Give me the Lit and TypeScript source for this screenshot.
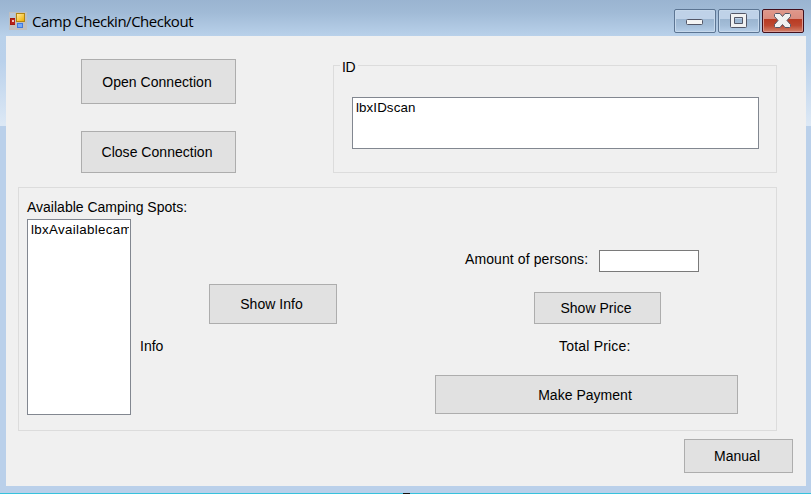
import { LitElement, html, svg, css } from "lit";
import { customElement, property } from "lit/decorators.js";

@customElement("form-button")
class FormButton extends LitElement {
  @property() label = "";
  static styles = css`
    :host { display: block; }
    button {
      box-sizing: border-box; width: 100%; height: 100%; display: block;
      margin: 0; padding: 0 3px 0 0; border: 1px solid #adadad; border-radius: 0;
      background: #e1e1e1; color: #000; font: inherit; letter-spacing: 0.03px;
    }
  `;
  render() {
    return html`<button>${this.label}</button>`;
  }
}

@customElement("list-box")
class ListBox extends LitElement {
  @property() item = "";
  static styles = css`
    :host {
      display: block; box-sizing: border-box; border: 1px solid #828790;
      background: #fff; padding: 2px 1px 0 3px;
      font-size: 13.33px; line-height: 16px; white-space: nowrap;
    }
    div { overflow: hidden; }
  `;
  render() {
    return html`<div>${this.item}</div>`;
  }
}

@customElement("caption-button")
class CaptionButton extends LitElement {
  @property({ reflect: true }) kind = "min";
  static styles = css`
    :host {
      display: block; box-sizing: border-box; width: 42px; height: 24px;
      border: 1px solid #5c7593; border-radius: 2px;
      box-shadow: inset 0 0 0 1px #c6d8eb;
      background: linear-gradient(#bfd2e8 0 40%, #9bb5d0 41%, #a3bdd8 70%, #b6cee8);
    }
    :host([kind="close"]) {
      border-color: #430f1b;
      box-shadow: inset 0 0 0 1px #dc9b91;
      background: linear-gradient(#e0988b 0, #d98c7f 40%, #b83a22 41%, #bd4730 70%, #d3836c);
    }
    svg { display: block; }
  `;
  render() {
    const glyph =
      this.kind === "min"
        ? svg`<rect x="11.5" y="9.5" width="16" height="5" rx="1" fill="#f4f4f4" stroke="#535666"/>`
        : this.kind === "max"
        ? svg`<path fill-rule="evenodd" d="M12.5 3.5h14a1 1 0 0 1 1 1v12a1 1 0 0 1-1 1h-14a1 1 0 0 1-1-1v-12a1 1 0 0 1 1-1zM15.5 7.5v6h8v-6z" fill="#f1f1f1" stroke="#535666"/>`
        : svg`<path d="M12.500 3.500h4.500l2.500 3 2.500-3h4.500l1 1v2l-3.500 4 3.500 4v2l-1 1h-4.500l-2.500-3-2.500 3h-4.500l-1-1v-2l3.500-4-3.500-4v-2z" fill="#f1f1f1" stroke="#535666" stroke-linejoin="round"/>`;
    return html`<svg width="40" height="22" viewBox="0 0 40 22">${glyph}</svg>`;
  }
}

@customElement("app-root")
class AppRoot extends LitElement {
  static styles = css`
    :host {
      display: flex; flex-direction: column; box-sizing: border-box;
      width: 811px; height: 494px; overflow: hidden; position: relative;
      background:
        linear-gradient(#9ab4d1, #a0bad6 12px, #b9d1ea 36px) 0 0 / 100% 36px no-repeat,
        linear-gradient(#b9d1ea, #bad1eb 25px, #dce8f5 88px, #dce8f5) 0 36px / 100% 90px no-repeat,
        #bad0ea;
      color: #000; font: 14px/18px "Liberation Sans", Arial, sans-serif;
    }
    .edge { height: 1px; margin-top: auto; background: #37c2dd; }
    .tick { width: 7px; height: 1px; margin-left: 403px; background: #111; }
    .title { height: 36px; flex: none; display: flex; box-sizing: border-box; padding: 9px 7px 0 9px; }
    .title .icon { display: block; margin-top: 3px; flex: none; }
    .title .text {
      flex: 1; margin: 2px 0 0 5px; white-space: nowrap;
      font: 15px/20px "Open Sans", "Noto Sans", sans-serif; letter-spacing: -0.48px;
    }
    .title .controls { display: flex; gap: 2px; }
    .client { box-sizing: border-box; width: 800px; height: 450px; margin-left: 6px; background: #f0f0f0; padding: 23px 13px 0 12px; flex: none; }
    .top { display: flex; justify-content: space-between; padding: 0 16px 0 63px; }
    .connection { width: 155px; display: flex; flex-direction: column; gap: 27px; }
    .open { height: 45px; }
    .close { height: 42px; }
    .id { box-sizing: border-box; width: 444px; height: 108px; margin-top: 6px; border: 1px solid #dcdcdc; padding: 0 17px 0 5px; }
    .legend { display: block; width: fit-content; margin: -8px 0 0 1px; padding: 0 3px 0 2px; background: #f0f0f0; height: 18px; letter-spacing: -0.3px; }
    .id list-box { height: 52px; margin: 21px 0 0 13px; letter-spacing: 0.1px; }
    .spots { box-sizing: border-box; width: 759px; height: 244px; margin-top: 14px; border: 1px solid #dcdcdc; display: flex; }
    .available { width: 104px; margin: 10px 0 0 8px; white-space: nowrap; }
    .available list-box { height: 196px; margin-top: 3px; letter-spacing: 0.32px; }
    .info { width: 198px; margin: 96px 0 0 9px; }
    .info form-button { width: 128px; height: 40px; margin: 0 0 13px 69px; }
    .payment { width: 303px; margin: 62px 0 0 97px; display: flex; flex-direction: column; }
    .amount { display: flex; padding-left: 30px; white-space: nowrap; }
    .amount label { width: 134px; letter-spacing: 0.1px; }
    .amount input { box-sizing: border-box; width: 100px; height: 22px; margin: 0; border: 1px solid #7a7a7a; background: #fff; padding: 0; }
    .price { width: 127px; height: 32px; margin: 20px 0 13px 99px; }
    .total { margin-left: 124px; letter-spacing: 0.2px; }
    .pay { height: 39px; margin-top: 20px; }
    .manual { width: 109px; height: 34px; margin: 8px 0 0 auto; }
  `;
  render() {
    return html`
      <div class="title">
        <svg class="icon" width="18" height="18" viewBox="0 0 18 18">
          <defs>
            <linearGradient id="gold" x2="1" y2="1"><stop stop-color="#ffe9a0"/><stop offset="1" stop-color="#f0b000"/></linearGradient>
          </defs>
          <rect width="18" height="18" fill="#c0c0c0"/>
          <rect x="1" y="1" width="5" height="5" fill="#b8c8da"/>
          <rect x="1" y="6" width="5" height="7" fill="#a51810"/>
          <rect x="2" y="7" width="4" height="5" fill="#b8241a"/>
          <rect x="3" y="8" width="2" height="2" fill="#f0c4bf"/>
          <rect x="7" y="1" width="9" height="9" fill="#b28510"/>
          <rect x="8" y="2" width="7" height="7" fill="url(#gold)"/>
          <rect x="8" y="11" width="6" height="5" fill="#3f78e0"/>
          <rect x="9" y="12" width="4" height="3" fill="#76a9f5"/>
        </svg>
        <span class="text">Camp Checkin/Checkout</span>
        <div class="controls">
          <caption-button kind="min"></caption-button>
          <caption-button kind="max"></caption-button>
          <caption-button kind="close"></caption-button>
        </div>
      </div>
      <div class="client">
        <div class="top">
          <div class="connection">
            <form-button class="open" label="Open Connection"></form-button>
            <form-button class="close" label="Close Connection"></form-button>
          </div>
          <div class="id">
            <span class="legend">ID</span>
            <list-box item="lbxIDscan"></list-box>
          </div>
        </div>
        <div class="spots">
          <div class="available">
            Available Camping Spots:
            <list-box item="lbxAvailablecam"></list-box>
          </div>
          <div class="info">
            <form-button label="Show Info"></form-button>
            Info
          </div>
          <div class="payment">
            <div class="amount"><label>Amount of persons:</label><input></div>
            <form-button class="price" label="Show Price"></form-button>
            <span class="total">Total Price:</span>
            <form-button class="pay" label="Make Payment"></form-button>
          </div>
        </div>
        <form-button class="manual" label="Manual"></form-button>
      </div>
      <div class="edge"><div class="tick"></div></div>
    `;
  }
}
